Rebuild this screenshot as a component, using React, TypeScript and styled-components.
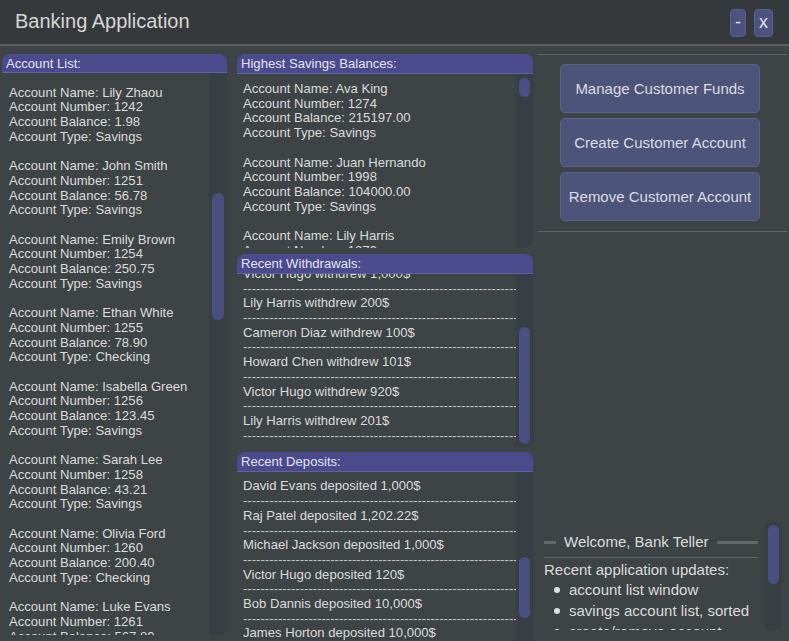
import React from "react";
import styled, { createGlobalStyle } from "styled-components";

const GlobalStyle = createGlobalStyle`
  html, body {
    margin: 0;
    padding: 0;
    background: #3e4346;
  }
  * {
    box-sizing: border-box;
  }
`;

type Account = {
    name: string;
    number: number;
    balance: string;
    type: string;
};

const accounts: Account[] = [
    { name: "Lily Zhaou", number: 1242, balance: "1.98", type: "Savings" },
    { name: "John Smith", number: 1251, balance: "56.78", type: "Savings" },
    { name: "Emily Brown", number: 1254, balance: "250.75", type: "Savings" },
    { name: "Ethan White", number: 1255, balance: "78.90", type: "Checking" },
    { name: "Isabella Green", number: 1256, balance: "123.45", type: "Savings" },
    { name: "Sarah Lee", number: 1258, balance: "43.21", type: "Savings" },
    { name: "Olivia Ford", number: 1260, balance: "200.40", type: "Checking" },
    { name: "Luke Evans", number: 1261, balance: "567.89", type: "Savings" },
];

const savings: Account[] = [
    { name: "Ava King", number: 1274, balance: "215197.00", type: "Savings" },
    { name: "Juan Hernando", number: 1998, balance: "104000.00", type: "Savings" },
    { name: "Lily Harris", number: 1279, balance: "98000.00", type: "Savings" },
];

const withdrawals = [
    "Victor Hugo withdrew 1,000$",
    "Lily Harris withdrew 200$",
    "Cameron Diaz withdrew 100$",
    "Howard Chen withdrew 101$",
    "Victor Hugo withdrew 920$",
    "Lily Harris withdrew 201$",
];

const deposits = [
    "David Evans deposited 1,000$",
    "Raj Patel deposited 1,202.22$",
    "Michael Jackson deposited 1,000$",
    "Victor Hugo deposited 120$",
    "Bob Dannis deposited 10,000$",
    "James Horton deposited 10,000$",
    "Lily Harris deposited 500$",
];

const updates = [
    "account list window",
    "savings account list, sorted",
    "create/remove account",
];

const Window = styled.div`
    width: 789px;
    height: 641px;
    overflow: hidden;
    background: #3e4346;
    color: #dcdcdc;
    font-family: "Liberation Sans", Arial, sans-serif;
    font-size: 13.1px;
    line-height: 14.7px;
`;

const TitleBar = styled.div`
    height: 46px;
    display: flex;
    align-items: center;
    padding: 0 16px 2px 15px;
    background: #36393b;
    border-bottom: 2px solid #5b5f61;
`;

const Title = styled.div`
    font-size: 20px;
    line-height: 24px;
    color: #d6d6d6;
`;

const TitleButtons = styled.div`
    margin-left: auto;
    display: flex;
    gap: 8px;
    margin-top: 4px;
`;

const TitleButton = styled.div<{ $w: number }>`
    width: ${(p) => p.$w}px;
    height: 28px;
    border-radius: 4px;
    background: #4d5180;
    border: 1px solid #5a5e8c;
    display: flex;
    align-items: center;
    justify-content: center;
    font-size: 18px;
    color: #e2e2e8;
    padding-bottom: 1px;
`;

const Main = styled.div`
    display: flex;
    padding: 8px 0 0 2px;
    height: 595px;
`;

const Column = styled.div<{ $w: number; $gap: number; $ml?: number }>`
    width: ${(p) => p.$w}px;
    margin-left: ${(p) => p.$ml ?? 0}px;
    display: flex;
    flex-direction: column;
    gap: ${(p) => p.$gap}px;
    flex-shrink: 0;
`;

const Panel = styled.div<{ $h: number }>`
    height: ${(p) => p.$h}px;
    display: flex;
    flex-direction: column;
    flex-shrink: 0;
`;

const PanelHeader = styled.div<{ $h: number }>`
    height: ${(p) => p.$h}px;
    background: #4a4a8c;
    border-radius: 8px 8px 0 0;
    border-bottom: 1px solid #6262a2;
    padding: 2px 4px 0;
    display: flex;
    align-items: center;
    color: #e4e4f0;
    flex-shrink: 0;
    position: relative;
    z-index: 1;
`;

const PanelBody = styled.div`
    flex: 1;
    display: flex;
    min-height: 0;
`;

const Content = styled.div<{ $pt: number; $pl: number }>`
    flex: 1;
    min-width: 0;
    overflow: hidden;
    padding: ${(p) => p.$pt}px 0 0 ${(p) => p.$pl}px;
`;

const Track = styled.div<{ $w: number; $round?: boolean }>`
    width: ${(p) => p.$w}px;
    flex-shrink: 0;
    background: #373f45;
    border-radius: ${(p) => (p.$round ? "0 6px 6px 0" : "0 0 8px 0")};
    padding: 0 3px;
`;

const Thumb = styled.div<{ $top: number; $size: number }>`
    margin-top: ${(p) => p.$top}px;
    height: ${(p) => p.$size}px;
    border-radius: 6px;
    background: #4a4f82;
`;

const AccountEntry = styled.div`
    margin-bottom: 14.7px;
    white-space: nowrap;
`;

const Line = styled.div`
    white-space: nowrap;
`;

const LogList = styled.div<{ $offset: number }>`
    margin-top: ${(p) => p.$offset}px;
`;

const DashLine = styled.div`
    white-space: nowrap;
    overflow: hidden;
    color: #c4c4c4;
`;

const RightColumn = styled.div`
    flex: 1;
    display: flex;
    flex-direction: column;
    margin-left: 5px;
    height: 587px;
`;

const Separator = styled.div`
    height: 1px;
    background: #5f6466;
    margin-right: 2px;
`;

const ButtonStack = styled.div`
    display: flex;
    flex-direction: column;
    gap: 5px;
    padding: 9px 0 10px 22px;
`;

const ActionButton = styled.div`
    width: 200px;
    height: 49px;
    border-radius: 5px;
    background: #4c5479;
    border: 1px solid #5c6388;
    display: flex;
    align-items: center;
    justify-content: center;
    padding-top: 1px;
    font-size: 15px;
    color: #dcdce2;
`;

const WelcomeBox = styled.div`
    margin-top: auto;
    margin-bottom: 11px;
    height: 108px;
    width: 244px;
    display: flex;
`;

const WelcomeContent = styled.div`
    flex: 1;
    overflow: hidden;
    padding: 11px 7px 0 6px;
    font-size: 15px;
`;

const WelcomeHeading = styled.div`
    display: flex;
    align-items: center;
    gap: 8px;
    line-height: 18px;
`;

const HeadingRule = styled.div<{ $w?: number }>`
    height: 3px;
    background: #63686a;
    ${(p) => (p.$w ? `width: ${p.$w}px;` : "flex: 1;")}
`;

const WelcomeRule = styled.div`
    height: 1px;
    background: #63686a;
    margin-top: 6px;
`;

const UpdatesTitle = styled.div`
    margin-top: 3px;
    line-height: 18px;
    white-space: nowrap;
`;

const Bullet = styled.div`
    display: flex;
    align-items: center;
    gap: 9px;
    padding-left: 10px;
    line-height: 21px;
    white-space: nowrap;
    &::before {
        content: "";
        width: 6px;
        height: 6px;
        border-radius: 50%;
        background: #e0e0e0;
        flex-shrink: 0;
    }
`;

const AccountBlock = ({ a }: { a: Account }) => (
    <AccountEntry>
        <Line>Account Name: {a.name}</Line>
        <Line>Account Number: {a.number}</Line>
        <Line>Account Balance: {a.balance}</Line>
        <Line>Account Type: {a.type}</Line>
    </AccountEntry>
);

const Log = ({ items, offset }: { items: string[]; offset: number }) => (
    <LogList $offset={offset}>
        {items.map((t, i) => (
            <React.Fragment key={i}>
                <Line>{t}</Line>
                <DashLine>{"-".repeat(90)}</DashLine>
            </React.Fragment>
        ))}
    </LogList>
);

export default function App() {
    return (
        <Window>
            <GlobalStyle />
            <TitleBar>
                <Title>Banking Application</Title>
                <TitleButtons>
                    <TitleButton $w={16}>-</TitleButton>
                    <TitleButton $w={19}>x</TitleButton>
                </TitleButtons>
            </TitleBar>
            <Main>
                <Column $w={225} $gap={0}>
                    <Panel $h={581}>
                        <PanelHeader $h={19}>Account List:</PanelHeader>
                        <PanelBody>
                            <Content $pt={12.6} $pl={7}>
                                {accounts.map((a) => (
                                    <AccountBlock key={a.number} a={a} />
                                ))}
                            </Content>
                            <Track $w={18}>
                                <Thumb $top={120} $size={127} />
                            </Track>
                        </PanelBody>
                    </Panel>
                </Column>
                <Column $w={296} $gap={5.5} $ml={10}>
                    <Panel $h={194}>
                        <PanelHeader $h={20}>Highest Savings Balances:</PanelHeader>
                        <PanelBody>
                            <Content $pt={8} $pl={6}>
                                {savings.map((a) => (
                                    <AccountBlock key={a.number} a={a} />
                                ))}
                            </Content>
                            <Track $w={17}>
                                <Thumb $top={4} $size={19} />
                            </Track>
                        </PanelBody>
                    </Panel>
                    <Panel $h={193}>
                        <PanelHeader $h={20}>Recent Withdrawals:</PanelHeader>
                        <PanelBody>
                            <Content $pt={0} $pl={6}>
                                <Log items={withdrawals} offset={-6.6} />
                            </Content>
                            <Track $w={17}>
                                <Thumb $top={53} $size={117} />
                            </Track>
                        </PanelBody>
                    </Panel>
                    <Panel $h={200}>
                        <PanelHeader $h={20}>Recent Deposits:</PanelHeader>
                        <PanelBody>
                            <Content $pt={7.4} $pl={6}>
                                <Log items={deposits} offset={0} />
                            </Content>
                            <Track $w={17}>
                                <Thumb $top={85} $size={61} />
                            </Track>
                        </PanelBody>
                    </Panel>
                </Column>
                <RightColumn>
                    <Separator />
                    <ButtonStack>
                        <ActionButton>Manage Customer Funds</ActionButton>
                        <ActionButton>Create Customer Account</ActionButton>
                        <ActionButton>Remove Customer Account</ActionButton>
                    </ButtonStack>
                    <Separator />
                    <WelcomeBox>
                        <WelcomeContent>
                            <WelcomeHeading>
                                <HeadingRule $w={12} />
                                <span>Welcome, Bank Teller</span>
                                <HeadingRule />
                            </WelcomeHeading>
                            <WelcomeRule />
                            <UpdatesTitle>Recent application updates:</UpdatesTitle>
                            {updates.map((u) => (
                                <Bullet key={u}>{u}</Bullet>
                            ))}
                        </WelcomeContent>
                        <Track $w={17} $round>
                            <Thumb $top={3} $size={59} />
                        </Track>
                    </WelcomeBox>
                </RightColumn>
            </Main>
        </Window>
    );
}
